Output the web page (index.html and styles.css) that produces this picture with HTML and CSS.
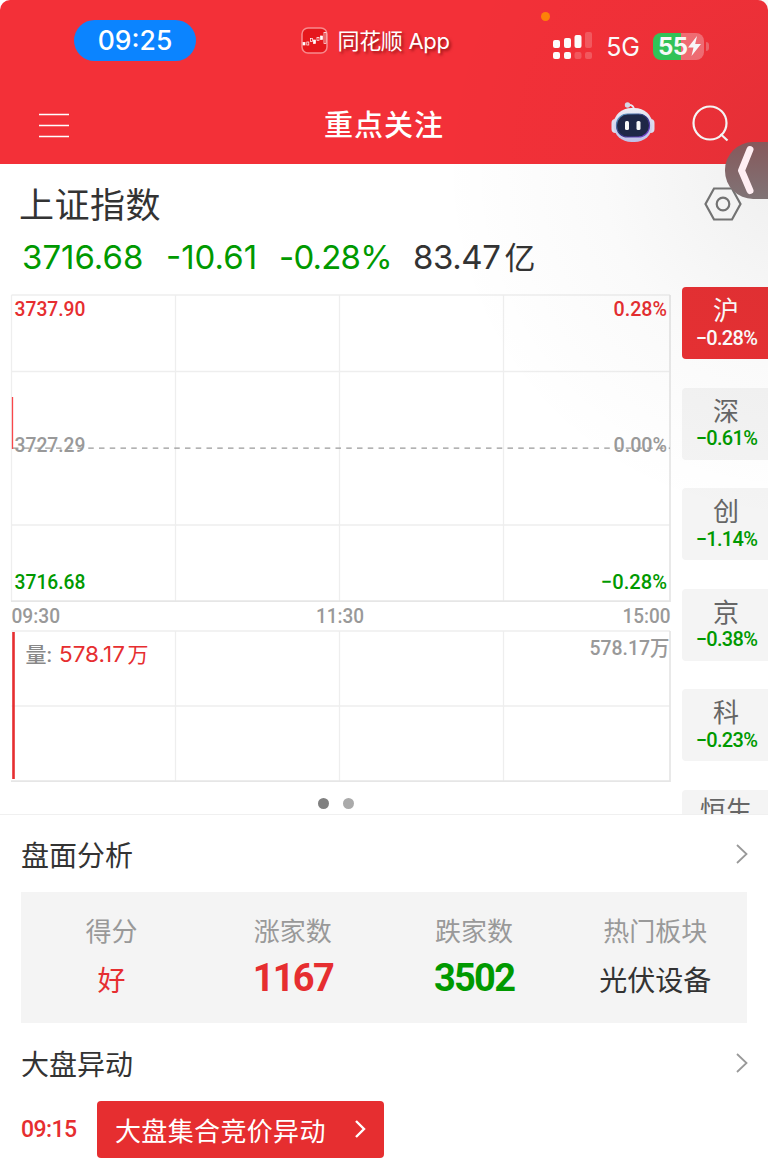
FILE: index.html
```
<!DOCTYPE html>
<html lang="zh-CN">
<head>
    <meta charset="UTF-8">
    <meta name="viewport" content="width=device-width, initial-scale=1.0">
    <title>重点关注</title>
    <link rel="stylesheet" href="styles.css">
</head>
<body>
    <div class="app">
        <header class="header">
            <div class="status">
                <span class="clock">09:25</span>
                <div class="brand">
                    <svg width="28" height="28" viewBox="0 0 28 28">
                        <rect x="1" y="1" width="25" height="25" rx="6" fill="#e5171c" stroke="#f78a8d" stroke-width="1.5"/>
                        <g fill="#fff" stroke="#fff" stroke-width=".7">
                            <rect x="2" y="15.500" width="2" height="2.500"/>
                            <rect x="5.800" y="15" width="2" height="3" fill="none"/>
                            <rect x="9.500" y="11.500" width="2" height="3" fill="none"/>
                            <rect x="12.500" y="13" width="2" height="3.500"/>
                            <rect x="16" y="10.500" width="2" height="2.800" fill="none"/>
                            <rect x="19.500" y="9" width="2" height="3.500"/>
                            <rect x="23" y="5.500" width="2" height="11" fill="none"/>
                        </g>
                    </svg>
                    <span>同花顺 App</span>
                </div>
                <div class="signals">
                    <svg width="39" height="28" viewBox="0 0 39 28" fill="#fff">
                        <rect x="0" y="8" width="7" height="8" rx="2"/>
                        <rect x="11" y="6" width="7" height="10" rx="2"/>
                        <rect x="21.500" y="3" width="7" height="13" rx="2"/>
                        <rect x="32" y="0" width="7" height="16" rx="2" opacity=".2"/>
                        <rect x="0" y="20" width="7" height="7" rx="2"/>
                        <rect x="11" y="20" width="7" height="7" rx="2"/>
                        <rect x="21.500" y="20" width="7" height="7" rx="2" opacity=".2"/>
                        <rect x="32" y="20" width="7" height="7" rx="2" opacity=".2"/>
                    </svg>
                    <span class="network">5G</span>
                    <div class="battery">
                        <span class="level">55</span>
                        <svg width="13" height="20" viewBox="0 0 13 20"><path d="M9 0 0 11.500h5.500L3.500 20 13 8H7.200z" fill="#fff"/></svg>
                    </div>
                </div>
                <i class="mic-dot"></i>
            </div>
            <nav class="navbar">
                <svg class="menu" width="30" height="25" viewBox="0 0 30 25" stroke="#fff" stroke-width="1.500"><path d="M0 1.500h30M0 12.500h30M0 23.500h30"/></svg>
                <h1>重点关注</h1>
                <div class="nav-icons">
                    <svg width="44" height="42" viewBox="0 0 44 42">
                        <defs>
                            <linearGradient id="shell" x1="0" y1="0" x2="0" y2="1"><stop offset="0" stop-color="#f3f4fb"/><stop offset="1" stop-color="#c3c5ee"/></linearGradient>
                            <linearGradient id="rim" x1="0" y1="0" x2="1" y2="1"><stop offset="0" stop-color="#6ab0d8"/><stop offset=".5" stop-color="#2b2f78"/><stop offset="1" stop-color="#8a4de8"/></linearGradient>
                        </defs>
                        <path d="M17 3q6-.5 6 5" fill="none" stroke="#eceef8" stroke-width="1.800"/>
                        <circle cx="16.500" cy="3" r="2.700" fill="#d9dcec"/>
                        <rect x=".5" y="17" width="8" height="14" rx="4" fill="#e2e3f5"/>
                        <rect x="35.500" y="17" width="8" height="14" rx="4" fill="#e2e3f5"/>
                        <rect x="2.500" y="6" width="39" height="34" rx="18" ry="16.500" fill="url(#shell)"/>
                        <rect x="5.500" y="12" width="33" height="23" rx="11" fill="#1e2748" stroke="url(#rim)" stroke-width="1.200"/>
                        <rect x="14" y="19" width="4" height="9" rx="1.500" fill="#fff"/>
                        <rect x="25.500" y="19" width="4" height="9" rx="1.500" fill="#fff"/>
                    </svg>
                    <svg width="37" height="37" viewBox="0 0 37 37" fill="none" stroke="#fff" stroke-width="2.200"><circle cx="18" cy="18" r="16.500"/><path d="m28.500 29 7 6.500"/></svg>
                </div>
            </nav>
        </header>

        <main>
            <section class="summary">
                <div class="index-head">
                    <h2>上证指数</h2>
                    <svg width="38" height="34" viewBox="0 0 38 34" fill="none" stroke="#777" stroke-width="2.200"><path d="M10 1.500h18L36.500 17 28 32.500H10L1.500 17z"/><circle cx="19" cy="17" r="6.300"/></svg>
                </div>
                <div class="quote">
                    <span class="price">3716.68</span>
                    <span class="change">-10.61</span>
                    <span class="percent">-0.28%</span>
                    <span class="amount">83.47<b>亿</b></span>
                </div>
            </section>

            <section class="market">
                <div class="chart-area">
                    <svg class="chart" width="682" height="490" viewBox="0 0 682 490">
                        <!-- price grid -->
                        <g class="grid">
                            <path d="M11.500 8H670M11.500 84.500H670M11.500 238H670M11.500 8V314M175.500 8V314M339.500 8V314M503.500 8V314"/>
                            <path class="edge" d="M11 314.200H670V8"/>
                        </g>
                        <path class="base" d="M13 161.200H670"/>
                        <path class="tick" d="M12.500 110V162"/>
                        <g class="label">
                            <text class="up" x="14.500" y="28.500" textLength="71" lengthAdjust="spacingAndGlyphs">3737.90</text>
                            <text class="up" x="613.500" y="28.500" textLength="53.500" lengthAdjust="spacingAndGlyphs">0.28%</text>
                            <text class="flat" x="14.500" y="165" textLength="71" lengthAdjust="spacingAndGlyphs">3727.29</text>
                            <text class="flat" x="613.500" y="165" textLength="53.500" lengthAdjust="spacingAndGlyphs">0.00%</text>
                            <text class="down" x="14.500" y="302" textLength="71" lengthAdjust="spacingAndGlyphs">3716.68</text>
                            <text class="down" x="601" y="302" textLength="66" lengthAdjust="spacingAndGlyphs">−0.28%</text>
                            <text class="flat" x="11.500" y="336" textLength="48.500" lengthAdjust="spacingAndGlyphs">09:30</text>
                            <text class="flat" x="316" y="336" textLength="48" lengthAdjust="spacingAndGlyphs">11:30</text>
                            <text class="flat" x="622.500" y="336" textLength="48" lengthAdjust="spacingAndGlyphs">15:00</text>
                        </g>
                        <!-- volume grid -->
                        <g class="grid">
                            <path d="M11.500 344H670M11.500 419H670M175.500 344V494M339.500 344V494M503.500 344V494"/>
                            <path class="edge" d="M11 494.200H670V344"/>
                        </g>
                        <path class="volume" d="M13.500 345V492"/>
                        <g class="label">
                            <text class="vol-name" x="25.500" y="375">量:</text>
                            <text class="vol-value" x="59" y="375" textLength="66" lengthAdjust="spacingAndGlyphs">578.17</text>
                            <text class="vol-value" x="127.500" y="375">万</text>
                            <text class="flat" x="589.500" y="367.500" textLength="80" lengthAdjust="spacingAndGlyphs">578.17万</text>
                        </g>
                    </svg>
                    <div class="dots"><i class="on"></i><i></i></div>
                </div>
                <aside class="tabs">
                    <div class="tab active"><b>沪</b><span>−0.28%</span></div>
                    <div class="tab"><b>深</b><span>−0.61%</span></div>
                    <div class="tab"><b>创</b><span>−1.14%</span></div>
                    <div class="tab"><b>京</b><span>−0.38%</span></div>
                    <div class="tab"><b>科</b><span>−0.23%</span></div>
                    <div class="tab"><b>恒生</b></div>
                </aside>
            </section>

            <section class="block">
                <div class="block-head">
                    <h3>盘面分析</h3>
                    <svg width="12" height="20" viewBox="0 0 12 20" fill="none" stroke="#999" stroke-width="1.800"><path d="m1 1 9.500 9L1 19"/></svg>
                </div>
                <div class="stats">
                    <div class="stat"><span>得分</span><b class="up">好</b></div>
                    <div class="stat"><span>涨家数</span><b class="num up">1167</b></div>
                    <div class="stat"><span>跌家数</span><b class="num down">3502</b></div>
                    <div class="stat"><span>热门板块</span><b>光伏设备</b></div>
                </div>
            </section>

            <section class="block">
                <div class="block-head">
                    <h3>大盘异动</h3>
                    <svg width="12" height="20" viewBox="0 0 12 20" fill="none" stroke="#999" stroke-width="1.800"><path d="m1 1 9.500 9L1 19"/></svg>
                </div>
                <div class="event">
                    <time>09:15</time>
                    <a class="event-link">大盘集合竞价异动
                        <svg width="11" height="18" viewBox="0 0 11 18" fill="none" stroke="#fff" stroke-width="2.400"><path d="m1 1 8 8-8 8"/></svg>
                    </a>
                </div>
            </section>
        </main>

        <div class="shade"></div>
        <div class="drawer">
            <svg width="18" height="50" viewBox="0 0 18 50" fill="none" stroke="#ffeef3" stroke-width="7" stroke-linecap="round" stroke-linejoin="round"><path d="M13 4.500 4.500 25.500l8.500 20"/></svg>
        </div>
    </div>
</body>
</html>
```
FILE: styles.css
```
* { box-sizing: border-box; }
body { margin: 0; background: #fff; font-family: Roboto, "Noto Sans CJK SC", sans-serif; color: #333; }
h1, h2, h3 { margin: 0; font-weight: 400; }
b { font-weight: 400; }
svg { display: block; flex: none; }
.app { position: relative; width: 768px; height: 1160px; overflow: hidden; }
.up { color: #e62e30; fill: #e62e30; }
.down { color: #009900; fill: #009900; }
.flat { fill: #999; }

/* header */
.header { height: 163.500px; background: #f33038; border-radius: 10px 10px 0 0; color: #fff; }
.status { position: relative; height: 82px; padding: 20px 64px 0 74px; display: flex; justify-content: space-between; align-items: flex-start; }
.clock { width: 122px; height: 41px; border-radius: 21px; background: #0b84ff; font: 500 26.5px/41px Inter, sans-serif; text-align: center; }
.brand { display: flex; align-items: center; gap: 8px; height: 41px; margin-left: 2px; font: 400 22px/30px Inter, "Noto Sans CJK SC", sans-serif; letter-spacing: -.3px; white-space: nowrap; text-shadow: 2px 2px 3px rgba(90, 0, 0, .6); }
.brand span { padding-top: 1px; }
.signals { display: flex; align-items: center; padding-top: 11px; }
.network { margin: 0 13px 0 14px; padding-top: 2px; font: 400 25px/28px Inter, sans-serif; }
.battery { position: relative; display: flex; align-items: center; width: 51px; height: 27px; border-radius: 8px; padding-left: 5px; background: linear-gradient(90deg, #32c759 55%, #f56e75 55%); }
.battery::after { content: ""; position: absolute; left: 53px; top: 9px; width: 3px; height: 9px; border-radius: 0 4px 4px 0; background: #f2666c; }
.level { font: 700 24px/27px Inter, sans-serif; letter-spacing: -.5px; }
.mic-dot { position: absolute; left: 541px; top: 12px; width: 9px; height: 9px; border-radius: 50%; background: #ff8208; }
.navbar { height: 81px; padding: 0 39px; display: grid; grid-template-columns: 1fr auto 1fr; align-items: center; }
.menu { margin-top: 6px; }
.navbar h1 { font-size: 29px; font-weight: 500; letter-spacing: 1px; line-height: 40px; padding-top: 7px; }
.nav-icons { display: flex; justify-content: flex-end; align-items: center; gap: 37px; padding-top: 1px; }

/* index quote */
.summary { height: 123.500px; padding: 15.500px 26px 0 19px; }
.index-head { display: flex; justify-content: space-between; align-items: center; height: 50px; }
.index-head h2 { padding-top: 6px; font-size: 35px; letter-spacing: .5px; line-height: 50px; }
.quote { display: flex; height: 56px; padding-left: 3px; font: 400 33px/56px Inter, "Noto Sans CJK SC", sans-serif; color: #009900; white-space: nowrap; }
.price { width: 144px; }
.change { width: 113px; }
.percent { width: 134px; letter-spacing: -.8px; }
.amount { color: #333; letter-spacing: -.4px; }
.amount b { margin-left: 4px; font-size: 31px; }

/* chart */
.market { display: flex; height: 528px; border-bottom: 1px solid #f0f0f0; overflow: hidden; }
.chart-area { width: 682px; }
.chart { height: 490px; overflow: visible; }
.grid { fill: none; stroke: #eee; stroke-width: 1.3; }
.grid .edge { stroke: #e6e6e6; stroke-width: 1.7; }
.base { stroke: #999; stroke-width: 1.3; stroke-dasharray: 5.500 5.250; }
.tick { stroke: #f9474a; stroke-width: 1.3; }
.volume { stroke: #e62e30; stroke-width: 2.6; }
.label { font-size: 21px; font-weight: 500; }
.label .vol-name { fill: #888; }
.label .vol-value { fill: #e62e30; font-family: Inter, "Noto Sans CJK SC", sans-serif; font-weight: 400; }
.dots { display: flex; justify-content: center; gap: 14px; padding: 21px 11px 0 0; }
.dots i { width: 11px; height: 11px; border-radius: 50%; background: #aaa; }
.dots .on { background: #808080; }

/* index switcher */
.tabs { flex: 1; display: flex; flex-direction: column; gap: 28.500px; }
.tab { flex: none; height: 72px; padding: 7px 0 0 2px; border-radius: 4px 0 0 4px; background: #f4f4f4; color: #666; text-align: center; }
.tab b { display: block; font-size: 26px; line-height: 34px; }
.tab span { display: block; margin-top: -1.500px; padding-left: 1px; color: #009900; font-size: 20px; font-weight: 500; line-height: 22px; letter-spacing: -.7px; }
.tab.active { background: #e83033; color: #fff; }
.tab.active span { color: #fff; }
.tab:last-child { padding-top: 4px; }

/* analysis and events */
.block { padding: 0 20px 0 21px; }
.block-head { display: flex; justify-content: space-between; align-items: center; height: 77px; }
.block-head h3 { font-size: 28px; }
.block + .block .block-head { height: 78px; padding-top: 1px; }
.stats { display: grid; grid-template-columns: repeat(4, 1fr); height: 131px; margin-right: 1px; padding: 20px 1px 0 0; background: #f4f4f4; text-align: center; }
.stat span { display: block; color: #999; font-size: 26px; line-height: 40px; }
.stat b { display: block; font-size: 28px; line-height: 60px; }
.stat .num { font-size: 38px; font-weight: 700; line-height: 53px; letter-spacing: -1.7px; }
.event { display: flex; align-items: center; gap: 20px; }
.event time { width: 56px; color: #e62e30; font-size: 23px; font-weight: 500; letter-spacing: -.6px; }
.event-link { display: flex; align-items: center; justify-content: space-between; width: 287px; height: 57px; padding: 0 18px 1px; border-radius: 4px; background: #e62e30; color: #fff; font-size: 26px; letter-spacing: .35px; }

/* floating drawer handle and soft shadow around it */
.shade { position: absolute; inset: 0; background: radial-gradient(circle 360px at 800px 165px, rgba(40, 40, 40, .08), rgba(40, 40, 40, .025) 55%, transparent); pointer-events: none; }
.drawer { position: absolute; left: 725px; top: 142px; width: 43px; height: 57px; padding: 3px 0 0 12px; border-radius: 28px 0 0 28px; background: linear-gradient(#86585b, #807476); }
```
